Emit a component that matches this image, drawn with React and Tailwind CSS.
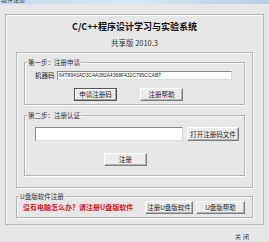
import React from 'react';

const cjk = { fontFamily: '"Noto Sans CJK SC", "Liberation Sans", sans-serif' };

function Btn({ children, w, h = 'h-[13px]', primary }) {
  return (
    <div
      className={`${w} ${h} flex items-center justify-center bg-[#ececec] text-[6.5px] leading-none text-[#222] ${
        primary
          ? 'border border-[#555] shadow-[inset_-1px_-1px_0_#a0a0a0,inset_1px_1px_0_#fff]'
          : 'border border-t-[#fff] border-l-[#fff] border-b-[#7d7d7d] border-r-[#7d7d7d] shadow-[inset_-1px_-1px_0_#b4b4b4]'
      }`}
    >
      {children}
    </div>
  );
}

function Group({ label, className, children }) {
  return (
    <fieldset
      className={`border border-[#b2b2b2] shadow-[inset_1px_1px_0_#fafafa,1px_1px_0_#fafafa] ${className}`}
    >
      <legend className="ml-[2px] px-[1px] bg-[#e7e7e7] text-[6.5px] leading-[8px] text-[#333]">
        {label}
      </legend>
      {children}
    </fieldset>
  );
}

export default function App() {
  return (
    <div className="w-[269px] h-[242px] overflow-hidden bg-[#e7e7e7]" style={cjk}>
      {/* title bar, mostly cut off by the crop */}
      <div className="h-[4px] overflow-hidden bg-gradient-to-r from-[#c7d9ee] via-[#dbe7f4] to-[#b8cde6]">
        <div className="-mt-[4px] pl-[1px] text-[6px] leading-[7px] text-[#333]">软件注册</div>
      </div>

      <div className="mx-[5px] mt-[10px] h-[211px] border border-[#b8b8b8] shadow-[inset_1px_1px_0_#fafafa]">
        <div className="mt-[6px] h-[12px] flex items-center justify-center text-[9px] font-bold text-[#111]">
          C/C++程序设计学习与实验系统
        </div>
        <div className="mt-[5px] h-[10px] flex items-center justify-center text-[7.5px] text-[#333]">
          共享版 2010.3
        </div>

        <div className="mx-[10px] mt-[4px] h-[136px] border border-[#b8b8b8] shadow-[inset_1px_1px_0_#fafafa,1px_1px_0_#fafafa] px-[7px] pt-[5px]">
          <Group label="第一步：注册申请" className="pb-[3px]">
            <div className="mt-[5px] flex items-center pl-[10px]">
              <span className="w-[22px] text-[6.5px] leading-none text-[#222]">机器码</span>
              <div className="w-[175px] h-[9px] bg-white border border-t-[#8a8a8a] border-l-[#8a8a8a] border-b-[#dcdcdc] border-r-[#dcdcdc] flex items-center pl-[1px] overflow-hidden">
                <span className="text-[5px] leading-none text-[#222] whitespace-nowrap" style={{ fontFamily: '"Liberation Sans", sans-serif' }}>
                  64T8943AD3C4A082A4368F432C795CCABT
                </span>
              </div>
            </div>
            <div className="mt-[8px] flex gap-[23px] pl-[49px]">
              <Btn w="w-[43px]" primary>申请注册码</Btn>
              <Btn w="w-[43px]">注册帮助</Btn>
            </div>
          </Group>

          <Group label="第二步：注册认证" className="mt-[6px] pb-[9px]">
            <div className="mt-[8px] flex gap-[4px] pl-[10px]">
              <div className="w-[148px] h-[14px] bg-white border border-t-[#8a8a8a] border-l-[#8a8a8a] border-b-[#dcdcdc] border-r-[#dcdcdc]" />
              <Btn w="w-[52px]" h="h-[14px]">打开注册码文件</Btn>
            </div>
            <div className="mt-[12px] flex pl-[79px]">
              <Btn w="w-[43px]">注册</Btn>
            </div>
          </Group>
        </div>

        <Group label="U盘版软件注册" className="mx-[10px] mt-[4px] pb-[3px] pr-[7px]">
          <div className="mt-[1px] flex items-center">
            <span className="flex-1 pl-[6px] text-[7px] font-bold leading-none text-[#d9141c]">
              没有电脑怎么办？请注册U盘版软件
            </span>
            <div className="flex gap-[3px]">
              <Btn w="w-[48px]">注册U盘版软件</Btn>
              <Btn w="w-[49px]">U盘版帮助</Btn>
            </div>
          </div>
        </Group>
      </div>

      <div className="mt-[9px] flex justify-end gap-[2px] pr-[20px] text-[6px] leading-none text-[#333]">
        <span>关</span>
        <span>闭</span>
      </div>
    </div>
  );
}
